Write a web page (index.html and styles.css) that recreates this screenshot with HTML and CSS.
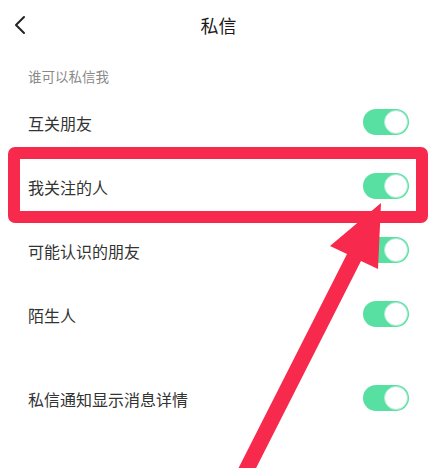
FILE: index.html
```html
<!DOCTYPE html>
<html lang="zh-CN">
<head>
<meta charset="utf-8">
<title>私信</title>
<link rel="stylesheet" href="styles.css">
</head>
<body>
<div class="page">
  <header class="header">
    <div class="back">
      <svg width="14" height="20" viewBox="0 0 14 20"><polyline points="11,2 3,10 11,18" fill="none" stroke="#222" stroke-width="2" stroke-linecap="round" stroke-linejoin="round"/></svg>
    </div>
    <div class="title">私信</div>
    <div></div>
  </header>
  <div class="section-label">谁可以私信我</div>
  <div class="row"><span class="row-text">互关朋友</span><span class="toggle"><span class="knob"></span></span></div>
  <div class="row"><span class="row-text">我关注的人</span><span class="toggle"><span class="knob"></span></span></div>
  <div class="row"><span class="row-text">可能认识的朋友</span><span class="toggle"><span class="knob"></span></span></div>
  <div class="row"><span class="row-text">陌生人</span><span class="toggle"><span class="knob"></span></span></div>
  <div class="row row-separate"><span class="row-text">私信通知显示消息详情</span><span class="toggle"><span class="knob"></span></span></div>

  <div class="highlight"></div>
  <svg class="arrow" width="437" height="468" viewBox="0 0 437 468">
    <polygon points="381,203 378,269 361,261 248,484 234,477 347,254 330,246" fill="#f7294c"/>
  </svg>
</div>
</body>
</html>
```
FILE: styles.css
```css
html, body {
  margin: 0;
  padding: 0;
  background: #fff;
}
body {
  font-family: "Noto Sans CJK SC", "Noto Sans", sans-serif;
  color: #333;
  overflow: hidden;
}
.page {
  position: relative;
  width: 437px;
  height: 468px;
  overflow: hidden;
}
.header {
  height: 50px;
  display: grid;
  grid-template-columns: 1fr auto 1fr;
  align-items: center;
}
.back {
  padding-left: 13px;
  display: flex;
  align-items: center;
}
.title {
  font-size: 18px;
  font-weight: 400;
  color: #1a1a1a;
  line-height: 20px;
}
.section-label {
  padding: 18px 28px 6px;
  font-size: 13.5px;
  line-height: 16px;
  color: #8a8a8a;
}
.row {
  height: 64px;
  padding: 0 28px;
  display: flex;
  align-items: center;
  justify-content: space-between;
}
.row-separate {
  margin-top: 20px;
}
.row-text {
  font-size: 16px;
  line-height: 20px;
  color: #333;
  padding-top: 2px;
}
.toggle {
  width: 46px;
  height: 26px;
  border-radius: 13px;
  background: #58e0a3;
  display: flex;
  align-items: center;
  justify-content: flex-end;
  padding: 1px;
  box-sizing: border-box;
}
.knob {
  width: 24px;
  height: 24px;
  border-radius: 50%;
  background: #fff;
  box-sizing: border-box;
  border: 1px solid #a8eccd;
}
.highlight {
  position: absolute;
  left: 8px;
  top: 147px;
  width: 420px;
  height: 76px;
  box-sizing: border-box;
  border: 12px solid #f7294c;
  border-radius: 7px;
}
.arrow {
  position: absolute;
  left: 0;
  top: 0;
}
```
